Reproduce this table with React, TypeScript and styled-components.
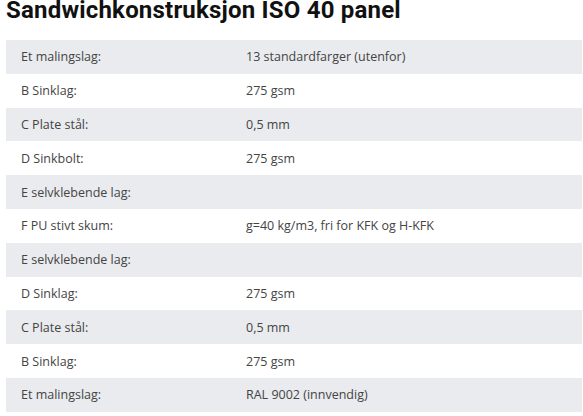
import React from "react";
import styled, { createGlobalStyle } from "styled-components";

const Global = createGlobalStyle`
  html, body { margin: 0; padding: 0; background: #ffffff; }
  body { font-family: "Open Sans", "Noto Sans", sans-serif; }
`;

const Page = styled.div`
  padding: 0 1px 0 6px;
`;

const Title = styled.h1`
  margin: 0 0 20px 0;
  font-family: Roboto, "Noto Sans", sans-serif;
  font-weight: 700;
  font-size: 24px;
  line-height: 20px;
  color: #111111;
  letter-spacing: 0.2px;
`;

const Table = styled.div`
  display: flex;
  flex-direction: column;
`;

const Row = styled.div<{ $shaded: boolean }>`
  display: grid;
  grid-template-columns: 225px 1fr;
  height: 33.8px;
  align-items: center;
  background: ${(p) => (p.$shaded ? "#e9ebee" : "#ffffff")};
`;

const Cell = styled.div`
  padding-left: 15px;
  font-size: 12.5px;
  color: #444444;
  white-space: nowrap;
`;

const rows: [string, string][] = [
  ["Et malingslag:", "13 standardfarger (utenfor)"],
  ["B Sinklag:", "275 gsm"],
  ["C Plate stål:", "0,5 mm"],
  ["D Sinkbolt:", "275 gsm"],
  ["E selvklebende lag:", ""],
  ["F PU stivt skum:", "g=40 kg/m3, fri for KFK og H-KFK"],
  ["E selvklebende lag:", ""],
  ["D Sinklag:", "275 gsm"],
  ["C Plate stål:", "0,5 mm"],
  ["B Sinklag:", "275 gsm"],
  ["Et malingslag:", "RAL 9002 (innvendig)"],
];

export default function App() {
  return (
    <Page>
      <Global />
      <Title>Sandwichkonstruksjon ISO 40 panel</Title>
      <Table>
        {rows.map(([k, v], i) => (
          <Row key={i} $shaded={i % 2 === 0}>
            <Cell>{k}</Cell>
            <Cell>{v}</Cell>
          </Row>
        ))}
      </Table>
    </Page>
  );
}
